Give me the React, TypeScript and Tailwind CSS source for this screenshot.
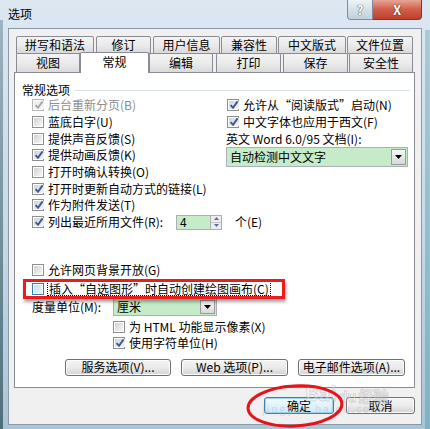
import { clsx } from "clsx";

const font = "font-['Noto_Sans_CJK_SC','Noto_Sans',sans-serif]";

function Box({ checked = false, disabled = false, focused = false }: { checked?: boolean; disabled?: boolean; focused?: boolean }) {
  return (
    <span
      className={clsx(
        "flex h-[12px] w-[12px] shrink-0 border bg-white p-px",
        disabled ? "border-[#b5b5b5]" : focused ? "border-[#3c7fb1]" : "border-[#8e8f8f]"
      )}
    >
      <span
        className={clsx(
          "flex flex-1 items-center justify-center bg-gradient-to-br",
          disabled ? "from-[#ececec] to-[#f6f6f6]" : focused ? "from-[#bfe0f5] to-[#eaf6fd]" : "from-[#d3d3d3] to-[#f6f6f6]"
        )}
      >
        {checked && (
          <svg viewBox="0 0 10 10" className="h-[10px] w-[10px] shrink-0">
            <path
              d="M1.6 5.2 L4 7.8 L8.6 1.4"
              fill="none"
              stroke={disabled ? "#a6a6a6" : "#3b579d"}
              strokeWidth="1.9"
            />
          </svg>
        )}
      </span>
    </span>
  );
}

function CheckRow({ label, checked, disabled, h = "h-[16.7px]" }: { label: string; checked?: boolean; disabled?: boolean; h?: string }) {
  return (
    <div className={clsx("flex items-center gap-[4px] whitespace-nowrap", h)}>
      <Box checked={checked} disabled={disabled} />
      <span className={disabled ? "text-[#8d8d8d]" : "text-black"}>{label}</span>
    </div>
  );
}

function Arrow() {
  return (
    <svg viewBox="0 0 7 4" className="h-[4px] w-[7px]">
      <path d="M0 0 H7 L3.5 4 Z" fill="#000" />
    </svg>
  );
}

function Combo({ value, className }: { value: string; className: string }) {
  return (
    <div className={clsx("flex border border-[#a9b0b8] bg-[#c6ebc9]", className)}>
      <span className="flex flex-1 items-center pl-[3px] leading-none">{value}</span>
      <span className="m-px flex w-[15px] items-center justify-center border border-[#9a9a9a] bg-gradient-to-b from-[#f6f6f6] to-[#d8d8d8]">
        <Arrow />
      </span>
    </div>
  );
}

function Btn({ label, className, primary }: { label: string; className: string; primary?: boolean }) {
  return (
    <div
      className={clsx(
        "flex items-center justify-center whitespace-nowrap rounded-[3px] border leading-none",
        primary
          ? "border-[#3c7fb1] bg-gradient-to-b from-[#f1f9fd] via-[#e3f3fb] to-[#c9e8f8] shadow-[inset_0_0_0_1px_#9fd6f5]"
          : "border-[#707070] bg-gradient-to-b from-[#f4f4f4] via-[#ebebeb] to-[#d3d3d3] shadow-[inset_0_0_0_1px_#fcfcfc]",
        className
      )}
    >
      {label}
    </div>
  );
}

const tabBase =
  "flex items-center justify-center rounded-t-[2px] border border-[#898c95] bg-gradient-to-b from-[#f3f3f3] via-[#ebebeb] to-[#dadada] leading-none";

export default function App() {
  return (
    <div
      className={clsx(
        "relative flex h-[429px] w-[430px] flex-col overflow-hidden bg-gradient-to-b from-[#dce7f1] via-[#c9dbe8] to-[#a9c6d6] text-[12px] text-black",
        font
      )}
    >
      {/* left / right frame edges */}
      <div className="absolute bottom-0 left-0 top-[20px] w-[3px] bg-gradient-to-b from-[#9db4c2] to-[#4f6f7c]" />
      <div className="absolute bottom-0 right-0 top-[30px] w-[5px] bg-gradient-to-b from-[#a8cbd6] to-[#7fb2c2]" />

      {/* title bar */}
      <div className="flex h-[28px] shrink-0 items-start justify-between">
        <span className="pl-[8px] pt-[6px] text-[12px] leading-[16px]">选项</span>
        <div className="mr-[8px] flex h-[20px]">
          <div className="flex w-[26px] items-center justify-center rounded-bl-[4px] border border-t-0 border-[#7d8d9c] bg-gradient-to-b from-[#eef3f7] via-[#d5e0e8] to-[#c3d1dc] text-[13px] font-bold leading-none text-white [text-shadow:0_0_1px_#3a4a58,0_0_1px_#3a4a58]">
            ?
          </div>
          <div className="flex w-[49px] items-center justify-center rounded-br-[4px] border border-l-0 border-t-0 border-[#7a3a30] bg-gradient-to-b from-[#e7a597] via-[#cf5e48] to-[#c0402b] text-[13px] font-bold leading-none text-white [text-shadow:0_0_1px_#3b1510,0_0_1px_#3b1510]">
            X
          </div>
        </div>
      </div>

      {/* client */}
      <div className="mx-[8px] flex h-[397px] shrink-0 flex-col border border-[#8b9aa8] bg-[#f0f0f0]">
        {/* tabs row 1 */}
        <div className="ml-[7px] mt-[7px] flex h-[18px]">
          <div className={clsx(tabBase, "w-[78px]")}>拼写和语法</div>
          <div className={clsx(tabBase, "ml-[2px] w-[55px]")}>修订</div>
          <div className={clsx(tabBase, "ml-[2px] w-[67px]")}>用户信息</div>
          <div className={clsx(tabBase, "ml-[1px] w-[56px]")}>兼容性</div>
          <div className={clsx(tabBase, "ml-[1px] w-[68px]")}>中文版式</div>
          <div className={clsx(tabBase, "ml-[1px] w-[66px]")}>文件位置</div>
        </div>
        {/* tabs row 2 */}
        <div className="relative z-10 -mt-[2px] ml-[7px] flex h-[20px] items-end">
          <div className={clsx(tabBase, "h-[19px] w-[64px] border-b-0")}>视图</div>
          <div className="-mb-px flex h-[21px] w-[69px] items-center justify-center rounded-t-[2px] border border-b-0 border-[#898c95] bg-white pb-[2px] leading-none">
            常规
          </div>
          <div className={clsx(tabBase, "h-[19px] w-[64px] border-b-0")}>编辑</div>
          <div className={clsx(tabBase, "ml-[3px] h-[19px] w-[65px] border-b-0")}>打印</div>
          <div className={clsx(tabBase, "ml-[2px] h-[19px] w-[65px] border-b-0")}>保存</div>
          <div className={clsx(tabBase, "ml-[1px] h-[19px] w-[64px] border-b-0")}>安全性</div>
        </div>

        {/* panel */}
        <div className="ml-[5px] flex h-[316px] w-[401px] flex-col border border-[#898c95] bg-white pt-[10px]">
          <div className="flex h-[14px] items-center">
            <span className="ml-[7px] leading-none">常规选项</span>
            <span className="ml-[5px] mr-[4px] h-px flex-1 bg-[#d5dfe5]" />
          </div>

          <div className="flex">
            <div className="flex w-[211px] flex-col pl-[17px]">
              <CheckRow label="后台重新分页(B)" checked disabled />
              <CheckRow label="蓝底白字(U)" />
              <CheckRow label="提供声音反馈(S)" />
              <CheckRow label="提供动画反馈(K)" checked />
              <CheckRow label="打开时确认转换(O)" />
              <CheckRow label="打开时更新自动方式的链接(L)" checked />
              <CheckRow label="作为附件发送(T)" checked />
            </div>
            <div className="flex flex-1 flex-col">
              <div className="pl-[1px]">
                <CheckRow label="允许从“阅读版式”启动(N)" checked />
                <CheckRow label="中文字体也应用于西文(F)" checked />
              </div>
              <div className="flex h-[16.7px] items-center whitespace-nowrap">英文 Word 6.0/95 文档(I):</div>
              <Combo value="自动检测中文文字" className="h-[20px] w-[182px]" />
            </div>
          </div>

          {/* recent files */}
          <div className="flex h-[17px] items-center pl-[17px] whitespace-nowrap">
            <Box checked />
            <span className="ml-[4px] w-[128px]">列出最近所用文件(R):</span>
            <div className="flex h-[15px]">
              <span className="flex w-[35px] items-center border border-[#a9b0b8] bg-[#c6ebc9] pl-[3px] leading-none">4</span>
              <span className="flex w-[11px] flex-col border border-l-0 border-[#a9b0b8] bg-[#ececec]">
                <span className="flex flex-1 items-center justify-center border-b border-[#c5c5c5]">
                  <svg viewBox="0 0 5 3" className="h-[3px] w-[5px]"><path d="M0 3 H5 L2.5 0 Z" fill="#5a6f9a" /></svg>
                </span>
                <span className="flex flex-1 items-center justify-center">
                  <svg viewBox="0 0 5 3" className="h-[3px] w-[5px]"><path d="M0 0 H5 L2.5 3 Z" fill="#5a6f9a" /></svg>
                </span>
              </span>
            </div>
            <span className="ml-[13px]">个(E)</span>
          </div>

          <div className="mt-[31px] pl-[17px]">
            <CheckRow label="允许网页背景开放(G)" h="h-[16px]" />
          </div>
          <div className="mt-[3px] flex h-[16px] items-center pl-[17px] whitespace-nowrap">
            <Box focused />
            <span className="ml-[3px] border border-dotted border-black px-px leading-[13px]">插入“自选图形”时自动创建绘图画布(C)</span>
          </div>

          <div className="mt-[1px] flex h-[18px] items-center pl-[17px] whitespace-nowrap">
            <span className="w-[81px]">度量单位(M):</span>
            <Combo value="厘米" className="h-[18px] w-[104px]" />
          </div>
          <div className="mt-[3px] pl-[98px]">
            <CheckRow label="为 HTML 功能显示像素(X)" h="h-[16px]" />
            <CheckRow label="使用字符单位(H)" checked h="h-[16px]" />
          </div>

          <div className="mt-[8px] flex justify-end gap-[10px] pr-[9px]">
            <Btn label="服务选项(V)..." className="h-[17px] w-[106px]" />
            <Btn label="Web 选项(P)..." className="h-[17px] w-[107px]" />
            <Btn label="电子邮件选项(A)..." className="h-[17px] w-[107px]" />
          </div>
        </div>

        {/* dialog buttons */}
        <div className="mt-[9px] flex justify-end gap-[12px] pr-[6px]">
          <Btn label="确定" primary className="h-[17px] w-[70px]" />
          <Btn label="取消" className="h-[17px] w-[69px]" />
        </div>
      </div>

      {/* watermark */}
      <div className="pointer-events-none absolute left-[305px] top-[383px] flex items-end gap-[2px] text-[20px] font-bold leading-none text-white/30 [-webkit-text-stroke:1px_rgba(150,150,150,0.35)]">
        <span>Bai</span>
        <span className="text-[14px]">du</span>
        <span className="text-[15px]">经验</span>
      </div>
      <div className="pointer-events-none absolute left-[262px] top-[404px] text-[10px] leading-none tracking-[2px] text-[#bbbbbb]/50">
        jingyan.baidu.com
      </div>

      {/* red annotation box */}
      <div className="pointer-events-none absolute left-[23px] top-[279px] h-[20px] w-[262px] border-[3px] border-[#ef1b1b] shadow-[1px_3px_3px_rgba(0,0,0,0.35)]" />

      {/* red ellipse */}
      <svg className="pointer-events-none absolute left-0 top-0" width="430" height="429">
        <ellipse cx="295" cy="406" rx="47" ry="20" fill="none" stroke="#e8121a" strokeWidth="3" transform="rotate(-3 295 406)" />
      </svg>
    </div>
  );
}
